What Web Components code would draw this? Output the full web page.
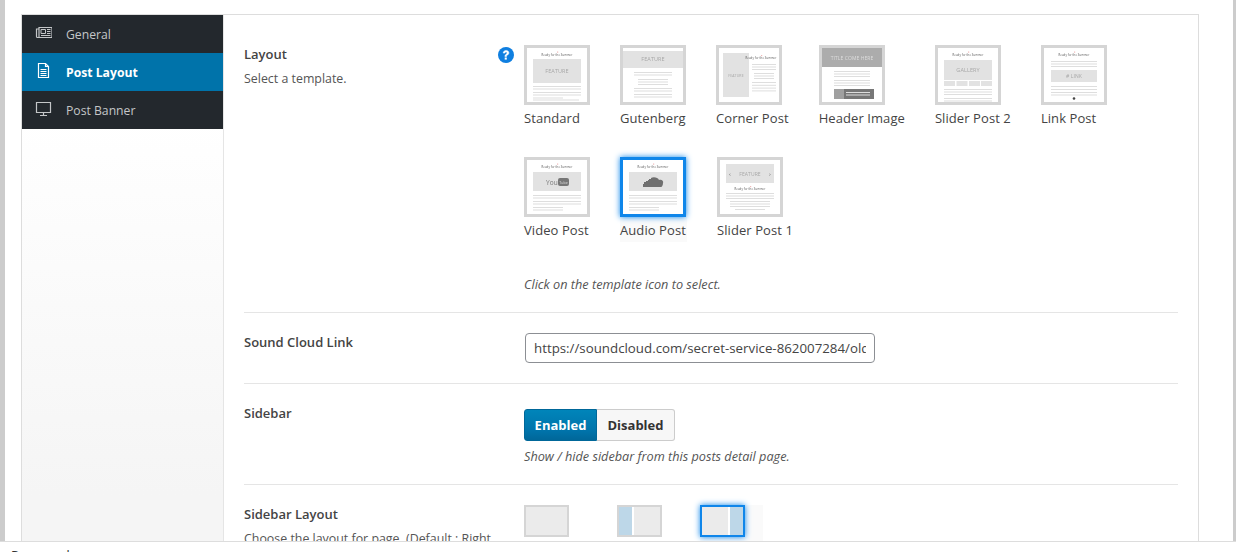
<!DOCTYPE html>
<html>
<head>
<meta charset="utf-8">
<title>Post options</title>
<style>
html, body { margin: 0; height: 100%; background: #fff; overflow: hidden; }
body { font: 13px/1.4 "Open Sans", sans-serif; color: #444; }
</style>
</head>
<body>
<admin-page>
    <options-panel>
        <nav-item slot="nav" icon="news">General</nav-item>
        <nav-item slot="nav" icon="doc" active>Post Layout</nav-item>
        <nav-item slot="nav" icon="screen">Post Banner</nav-item>

        <option-row first heading="Layout" desc="Select a template." help style="padding-bottom:19px">
            <div style="display:flex;flex-wrap:wrap;gap:0 30px;width:640px">
                <template-pick kind="standard">Standard</template-pick>
                <template-pick kind="gutenberg">Gutenberg</template-pick>
                <template-pick kind="corner">Corner Post</template-pick>
                <template-pick kind="header">Header Image</template-pick>
                <template-pick kind="gallery">Slider Post 2</template-pick>
                <template-pick kind="link">Link Post</template-pick>
                <template-pick kind="video">Video Post</template-pick>
                <template-pick kind="audio" selected style="min-width:67px">Audio Post</template-pick>
                <template-pick kind="slider">Slider Post 1</template-pick>
            </div>
            <field-note style="margin-top:6px">Click on the template icon to select.</field-note>
        </option-row>

        <option-row heading="Sound Cloud Link">
            <text-field>https://soundcloud.com/secret-service-862007284/old-town-road</text-field>
        </option-row>

        <option-row heading="Sidebar" style="padding-bottom:19px">
            <on-off></on-off>
            <field-note style="margin-top:6px">Show / hide sidebar from this posts detail page.</field-note>
        </option-row>

        <option-row heading="Sidebar Layout" desc="Choose the layout for page. (Default : Right Sidebar)">
            <div style="display:flex;gap:30px">
                <sidebar-pick kind="none" style="width:63px"></sidebar-pick>
                <sidebar-pick kind="left" style="width:53px"></sidebar-pick>
                <sidebar-pick kind="right" selected style="width:63px"></sidebar-pick>
            </div>
        </option-row>
    </options-panel>
    <span slot="foot">Password</span>
</admin-page>

<script>
class AdminPage extends HTMLElement {
    constructor() {
        super()
        this.attachShadow({ mode: 'open' }).innerHTML = `
            <style>
                :host { display: flex; flex-direction: column; height: 552px; overflow: hidden; }
                .top {
                    height: 541px;
                    box-sizing: border-box;
                    flex: none;
                    overflow: hidden;
                    padding: 14px 34px 0 16px;
                    border-left: 5px solid #ccc;
                    border-right: 3px solid #ccc;
                }
                .foot {
                    flex: none;
                    border-top: 1px solid #ddd;
                    padding: 4px 0 0 11px;
                    line-height: 18px;
                    color: #333;
                    font-size: 13px;
                }
            </style>
            <div class="top"><slot></slot></div>
            <div class="foot"><slot name="foot"></slot></div>`
    }
}

class OptionsPanel extends HTMLElement {
    constructor() {
        super()
        this.attachShadow({ mode: 'open' }).innerHTML = `
            <style>
                :host {
                    display: flex;
                    border: 1px solid #ddd;
                    min-height: 700px;
                    background: #fff;
                }
                nav {
                    flex: none;
                    width: 201px;
                    min-height: 700px;
                    border-right: 1px solid #e5e5e5;
                    background: linear-gradient(#fff 100px, #f5f5f5 480px);
                }
                .body { flex: 1; padding: 0 20px; }
            </style>
            <nav><slot name="nav"></slot></nav>
            <div class="body"><slot></slot></div>`
    }
}

// icones du menu
const NAV_ICONS = {
    news: '<path d="M4 3.5h13v10H4zM4 5H1.5v7.5a1 1 0 0 0 1 1H4" fill="none" stroke="currentColor" stroke-width="1.2"/><path d="M6 5.500h4.500v4H6zM12 5.500h3.500M12 7.500h3.500M12 9.500h3.500M6 11.500h9.500" fill="none" stroke="currentColor"/>',
    doc: '<path d="M3.500 1.500h7l3 3v11h-10zM10.500 1.500v3h3" fill="none" stroke="currentColor" stroke-width="1.2"/><path d="M5.500 7.500h6M5.500 9.500h6M5.500 11.500h6M5.500 13.500h6" stroke="currentColor"/>',
    screen: '<path d="M1.500 2.500h14v10h-14z" fill="none" stroke="currentColor" stroke-width="1.2"/><path d="M8.500 13v2M5 15.500h7" stroke="currentColor" stroke-width="1.200"/>'
}

class NavItem extends HTMLElement {
    constructor() {
        super()
        const active = this.hasAttribute('active')
        this.attachShadow({ mode: 'open' }).innerHTML = `
            <style>
                :host {
                    display: flex;
                    align-items: center;
                    height: 38px;
                    padding-left: 13px;
                    background: ${active ? '#0073aa' : '#23282d'};
                    color: ${active ? '#fff' : '#c4c6c8'};
                    font-size: 12.2px;
                    font-weight: ${active ? 700 : 400};
                }
                svg { flex: none; width: 17px; height: 17px; margin: -4px 14px 0 0; }
                span { margin-top: 2px; }
            </style>
            <svg viewBox="0 0 17 17">${NAV_ICONS[this.getAttribute('icon')]}</svg>
            <span><slot></slot></span>`
    }
}

class OptionRow extends HTMLElement {
    constructor() {
        super()
        const first = this.hasAttribute('first')
        const desc = this.getAttribute('desc')
        this.attachShadow({ mode: 'open' }).innerHTML = `
            <style>
                :host {
                    display: grid;
                    grid-template-columns: 280px 1fr;
                    padding: ${first ? '30px' : '20px'} 0 20px;
                    border-bottom: 1px solid #e5e5e5;
                    position: relative;
                }
                h3 { margin: 0; font-size: 13px; line-height: 18px; font-weight: 600; color: #444; }
                p { margin: 7px 0 0; font-size: 12.4px; line-height: 18px; color: #555; width: 260px; }
                .help { position: absolute; left: 254px; top: 32px; width: 16px; height: 16px; }
            </style>
            <div>
                <h3>${this.getAttribute('heading')}</h3>
                ${desc ? `<p>${desc}</p>` : ''}
            </div>
            <div><slot></slot></div>
            ${this.hasAttribute('help') ? `<svg class="help" viewBox="0 0 16 16"><circle cx="8" cy="8" r="8" fill="#0f7fe0"/><path d="M5.200 6.100C5.300 4.400 6.500 3.400 8.100 3.400c1.600 0 2.800 1 2.800 2.400 0 1.200-.7 1.800-1.500 2.300-.7.500-.9.800-.9 1.500H6.900c0-1.200.3-1.800 1.100-2.300.7-.5 1-.8 1-1.400 0-.6-.4-1-1-1-.7 0-1 .5-1.100 1.200z" fill="#fff" stroke="#fff" stroke-width=".5"/><rect x="6.700" y="10.500" width="2.100" height="2.100" fill="#fff"/></svg>` : ''}`
    }
}

class FieldNote extends HTMLElement {
    constructor() {
        super()
        this.attachShadow({ mode: 'open' }).innerHTML = `
            <style>
                :host { display: block; font-size: 12.7px; font-style: italic; line-height: 18px; color: #555; }
            </style>
            <slot></slot>`
    }
}

class TextField extends HTMLElement {
    constructor() {
        super()
        this.attachShadow({ mode: 'open' }).innerHTML = `
            <style>
                :host {
                    display: block;
                    box-sizing: border-box;
                    width: 350px;
                    height: 30px;
                    margin-left: 1px;
                    padding: 0 8px;
                    border: 1px solid #8c8f94;
                    border-radius: 4px;
                    font-size: 13.3px;
                    line-height: 28px;
                    color: #444;
                }
                div { overflow: hidden; white-space: nowrap; }
            </style>
            <div><slot></slot></div>`
    }
}

class OnOff extends HTMLElement {
    constructor() {
        super()
        this.attachShadow({ mode: 'open' }).innerHTML = `
            <style>
                :host { display: inline-flex; margin-top: 5px; height: 32px; font-size: 13px; font-weight: 700; line-height: 30px; vertical-align: top; }
                span { display: block; box-sizing: border-box; text-align: center; }
                .on {
                    width: 73px;
                    color: #fff;
                    border: 1px solid #006799;
                    border-radius: 3px 0 0 3px;
                    background: linear-gradient(#0085ba, #0073aa 70%, #006799);
                }
                .off {
                    width: 78px;
                    color: #333;
                    border: 1px solid #ccc;
                    border-left: 0;
                    border-radius: 0 3px 3px 0;
                    background: #f7f7f7;
                }
            </style>
            <span class="on">Enabled</span><span class="off">Disabled</span>`
    }
}

// petites maquettes des modeles
const bars = (x, y, w, rows, gap = 3) => {
    let dom = ''
    for (let i = 0; i < rows; i++) {
        dom += `<rect x="${x}" y="${y + i * gap}" width="${w}" height="1" fill="#dedede"/>`
    }
    return dom
}
const label = (x, y, s, size = 5.500, fill = '#a8a8a8') =>
    `<text x="${x}" y="${y}" font-family="Open Sans" font-size="${size}" fill="${fill}" text-anchor="middle">${s}</text>`
const heading = (y, x = 30) =>
    `<rect x="${x}" y="${y - 4}" width="1.200" height="1.200" fill="#f0b8b8"/>` + label(x, y, 'Ready for the Summer', 2.800, '#555')
const block = (x, y, w, h, fill = '#e2e2e2') => `<rect x="${x}" y="${y}" width="${w}" height="${h}" fill="${fill}"/>`

const THUMBS = {
    standard: heading(7.500) + block(6, 11, 48, 24) + label(30, 25, 'FEATURE') + bars(6, 38, 48, 2, 2.500) + bars(6, 44, 48, 2, 2.500) + bars(6, 49.500, 30, 1) + bars(6, 51.500, 46, 1),
    gutenberg: block(0, 3, 60, 17) + label(30, 13, 'FEATURE') + bars(11, 24, 38, 2, 2.500) + bars(15, 31, 30, 3, 2.500) + bars(11, 40, 38, 2, 2.500) + bars(11, 46, 38, 2, 2.500),
    corner: block(4, 5, 26, 44) + label(17, 29, 'FEATURE', 3.600) + heading(11, 42) + bars(33, 16, 24, 3, 2.500) + bars(35, 25, 20, 3, 2.500) + bars(33, 34, 24, 4, 2.800),
    header: block(0, 0, 60, 19, '#acacac') + label(30, 12, 'TITLE COME HERE', 5, '#dcdcdc') + bars(12, 23, 36, 3, 2.500) + bars(12, 32, 36, 3, 2.500) + block(12, 41, 40, 10, '#777') + block(12, 41, 10, 10, '#a0a0a0') + bars(24, 44, 24, 2, 2.500),
    gallery: heading(7.500) + block(6, 12, 48, 20) + label(30, 24, 'GALLERY') + block(6, 33, 11, 5) + block(18.500, 33, 11, 5) + block(31, 33, 11, 5) + block(43, 33, 11, 5) + bars(6, 41, 48, 3, 2.500) + bars(6, 50, 48, 2, 2.500),
    link: heading(7.500) + bars(7, 13, 46, 3, 2.500) + block(7, 22, 46, 12) + label(30, 30, '# LINK', 5) + bars(7, 38, 46, 2, 3) + bars(7, 44, 46, 2, 2.500) + '<circle cx="30" cy="50.500" r="1.300" fill="#444"/>',
    video: heading(7.500) + block(6, 12, 48, 19) + label(25, 24.500, 'You', 6.500, '#777') + '<rect x="31" y="18" width="11" height="8" rx="2" fill="#777"/>' + label(36.500, 23.500, 'Tube', 3.500, '#ddd') + bars(6, 35, 48, 2, 2.500) + bars(6, 41, 48, 2, 2.500) + bars(6, 47, 30, 2, 2.500),
    audio: heading(7.500) + block(6, 12, 48, 19) + '<path d="M20 27v-3h1v-2h2v-1h2v-1h1v-1h2v-1c2-1.500 7-1 8 2 2-1 5 1 4 3 0 2-1 4-2 4z" fill="#6f6f6f"/>' + bars(6, 35, 48, 2, 2.500) + bars(6, 41, 48, 2, 2.500) + bars(6, 47, 30, 2, 2.500),
    slider: block(6, 4, 48, 19) + label(30, 15.500, 'FEATURE', 5) + label(10, 15.500, '‹', 6, '#666') + label(50, 15.500, '›', 6, '#666') + heading(30) + bars(6, 33, 48, 3, 2.500) + bars(10, 41, 40, 3, 2.500) + bars(15, 49, 30, 1)
}

class TemplatePick extends HTMLElement {
    constructor() {
        super()
        const selected = this.hasAttribute('selected')
        this.attachShadow({ mode: 'open' }).innerHTML = `
            <style>
                :host {
                    display: block;
                    height: 112px;
                    font-size: 13px;
                    line-height: 18px;
                    letter-spacing: .08px;
                    color: #444;
                }
                .wrap { height: 85px; background: ${selected ? '#fafafa' : 'transparent'}; }
                svg {
                    display: block;
                    box-sizing: border-box;
                    width: 66px;
                    height: 60px;
                    border: 3px solid ${selected ? '#0f86ea' : '#d5d5d5'};
                    box-shadow: ${selected ? '0 0 6px #0f86ea' : 'none'};
                    background: #fff;
                }
                .name { margin-top: -21px; white-space: nowrap; }
            </style>
            <div class="wrap">
                <svg viewBox="0 0 60 54" preserveAspectRatio="none"><g style="filter:blur(.45px)">${THUMBS[this.getAttribute('kind')]}</g></svg>
            </div>
            <div class="name"><slot></slot></div>`
    }
}

class SidebarPick extends HTMLElement {
    constructor() {
        super()
        const selected = this.hasAttribute('selected')
        const kind = this.getAttribute('kind')
        const side = kind === 'none' ? '' : `<i style="${kind === 'left' ? 'left:0' : 'right:0'}"></i>`
        this.attachShadow({ mode: 'open' }).innerHTML = `
            <style>
                :host { display: block; height: 60px; background: ${selected ? '#fafafa' : 'transparent'}; }
                div {
                    position: relative;
                    box-sizing: border-box;
                    width: 45px;
                    height: 32px;
                    border: 2px solid ${selected ? '#0f86ea' : '#d5d5d5'};
                    box-shadow: ${selected ? '0 0 6px #0f86ea' : 'none'};
                    background: #ebebeb;
                }
                i {
                    position: absolute;
                    top: 0;
                    bottom: 0;
                    width: 13px;
                    background: #bdd7e8;
                    border-${kind === 'left' ? 'right' : 'left'}: 2px solid #fff;
                }
            </style>
            <div>${side}</div>`
    }
}

customElements.define('admin-page', AdminPage)
customElements.define('options-panel', OptionsPanel)
customElements.define('nav-item', NavItem)
customElements.define('option-row', OptionRow)
customElements.define('field-note', FieldNote)
customElements.define('text-field', TextField)
customElements.define('on-off', OnOff)
customElements.define('template-pick', TemplatePick)
customElements.define('sidebar-pick', SidebarPick)
</script>
</body>
</html>
